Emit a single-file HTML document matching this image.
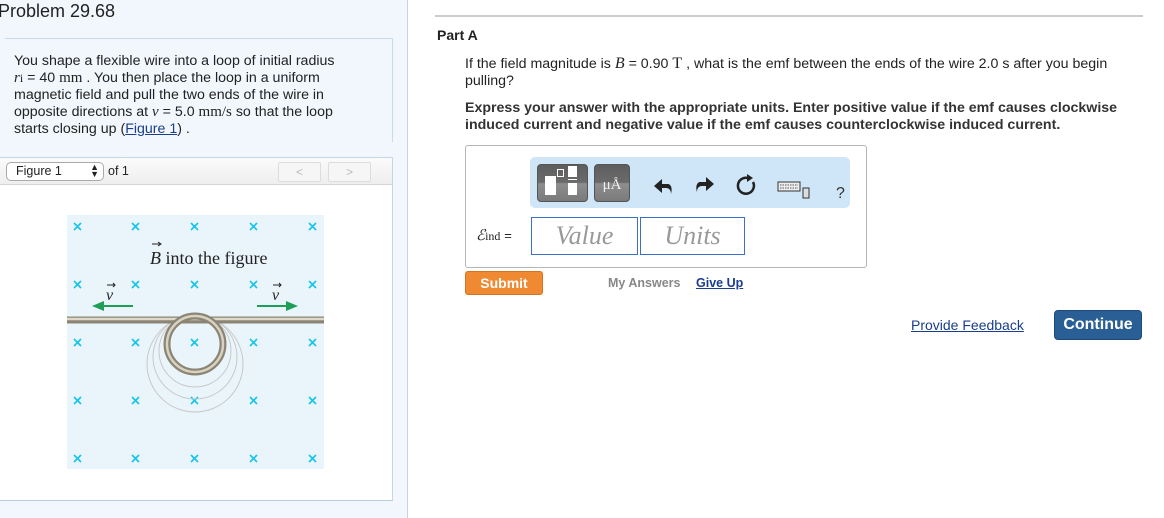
<!DOCTYPE html>
<html><head><meta charset="utf-8"><style>
*{margin:0;padding:0;box-sizing:border-box}
body{width:1164px;height:518px;position:relative;background:#fff;font-family:"Liberation Sans",Arial,sans-serif;overflow:hidden;color:#222}
.abs{position:absolute}
.m{font-family:"Liberation Serif",serif;font-style:italic}
.mono{font-family:"Liberation Serif",serif}
a{color:#1a3e8c}
.btn{border-radius:4px;background:linear-gradient(#5e5e5e 0,#6a6a6a 48%,#8e8e8e 52%,#7a7a7a 100%);border:1px solid #555}
</style></head><body>
<div class="abs" style="left:0;top:0;width:408px;height:518px;background:#f1f7fc;border-right:1px solid #c4d6e6"></div>
<div class="abs" style="left:-2px;top:1px;font-size:18px;color:#222">Problem 29.68</div>
<div class="abs" style="left:5px;top:38px;width:388px;height:104px;border-top:1px solid #c9dbe8;border-right:1px solid #c9dbe8"></div>
<div class="abs" style="left:14px;top:53px;width:345px;font-size:14.2px;line-height:17px;color:#222">You shape a flexible wire into a loop of initial radius <span style="white-space:nowrap"><span class="m" style="font-size:15px">r</span><span class="mono" style="font-size:12px">i</span> = 40 <span class="mono" style="font-size:15px">mm</span></span> . You then place the loop in a uniform magnetic field and pull the two ends of the wire in opposite directions at <span class="m" style="font-size:15px">v</span> = 5.0 <span class="mono" style="font-size:15px">mm/s</span> so that the loop starts closing up (<a href="#">Figure 1</a>) .</div>
<div class="abs" style="left:0;top:157px;width:393px;height:344px;background:#fff;border-top:1px solid #c4d6e6;border-right:1px solid #c4d6e6;border-bottom:1px solid #b8cadb"></div>
<div class="abs" style="left:0;top:158px;width:392px;height:27px;background:linear-gradient(#fbfbfb,#eeeeee);border-bottom:1px solid #d4d4d4"></div>
<div class="abs" style="left:6px;top:162px;width:98px;height:19px;border:1px solid #aaa;border-radius:5px;background:#fff;font-size:12.5px;padding:1px 0 0 9px">Figure 1<span style="position:absolute;right:4px;top:1px;font-size:9px;line-height:7px">▲<br>▼</span></div>
<div class="abs" style="left:108px;top:164px;font-size:12.5px">of 1</div>
<div class="abs" style="left:278px;top:162px;width:43px;height:20px;border:1px solid #ddd;border-radius:2px;background:#f6f6f6;color:#bbb;text-align:center;font-size:12px;line-height:18px">&lt;</div>
<div class="abs" style="left:328px;top:162px;width:43px;height:20px;border:1px solid #ddd;border-radius:2px;background:#f6f6f6;color:#bbb;text-align:center;font-size:12px;line-height:18px">&gt;</div>
<svg class="abs" style="left:0;top:0" width="408" height="518">
<rect x="67" y="215" width="257" height="254" fill="#eaf5fb"/>
<g stroke="#13c4ec" stroke-width="1.6" fill="none">
<path d="M74 223l7 7m0-7l-7 7M132 223l7 7m0-7l-7 7M191 223l7 7m0-7l-7 7M250 223l7 7m0-7l-7 7M309 223l7 7m0-7l-7 7
M74 281l7 7m0-7l-7 7M132 281l7 7m0-7l-7 7M191 281l7 7m0-7l-7 7M250 281l7 7m0-7l-7 7M309 281l7 7m0-7l-7 7
M74 339l7 7m0-7l-7 7M132 339l7 7m0-7l-7 7M191 339l7 7m0-7l-7 7M250 339l7 7m0-7l-7 7M309 339l7 7m0-7l-7 7
M74 397l7 7m0-7l-7 7M132 397l7 7m0-7l-7 7M191 397l7 7m0-7l-7 7M250 397l7 7m0-7l-7 7M309 397l7 7m0-7l-7 7
M74 455l7 7m0-7l-7 7M132 455l7 7m0-7l-7 7M191 455l7 7m0-7l-7 7M250 455l7 7m0-7l-7 7M309 455l7 7m0-7l-7 7"/>
</g>
<g fill="none" stroke="#c8c8c8" stroke-width="1">
<circle cx="195" cy="364" r="48"/><circle cx="195" cy="357" r="42"/><circle cx="195" cy="351" r="36"/>
</g>
<line x1="67" y1="320" x2="324" y2="320" stroke="#8c8575" stroke-width="7"/>
<line x1="67" y1="319" x2="324" y2="319" stroke="#ddd8c8" stroke-width="2.5"/>
<circle cx="195" cy="344" r="28" fill="none" stroke="#8c8575" stroke-width="7"/>
<circle cx="195" cy="344" r="28" fill="none" stroke="#d8d2c0" stroke-width="2.5"/>
<path d="M133 305H104v-4l-12 5 12 5v-4h29z" fill="#1f9e57"/>
<path d="M257 305h29v-4l12 5-12 5v-4h-29z" fill="#1f9e57"/>
<text x="150" y="264" font-family="Liberation Serif,serif" font-size="18" fill="#222"><tspan font-style="italic">B</tspan> into the figure</text>
<path d="M152 244h9m-3-2l3 2-3 2" stroke="#222" fill="none" stroke-width="1"/>
<text x="106" y="300" font-family="Liberation Serif,serif" font-style="italic" font-size="16" fill="#222">v</text>
<text x="272" y="300" font-family="Liberation Serif,serif" font-style="italic" font-size="16" fill="#222">v</text>
<path d="M107 285h8m-2-2l2 2-2 2M273 285h8m-2-2l2 2-2 2" stroke="#222" fill="none" stroke-width="1"/>
</svg>
<div class="abs" style="left:435px;top:15px;width:708px;height:2px;background:#ccc"></div>
<div class="abs" style="left:437px;top:27px;font-size:14px;font-weight:bold">Part A</div>
<div class="abs" style="left:465px;top:55px;width:665px;font-size:14.2px;line-height:17px">If the field magnitude is <span class="m" style="font-size:16px">B</span> = 0.90 <span class="mono" style="font-size:16px">T</span> , what is the emf between the ends of the wire 2.0 s after you begin pulling?</div>
<div class="abs" style="left:465px;top:100px;width:670px;font-size:14.2px;line-height:17px;font-weight:bold;color:#333">Express your answer with the appropriate units. Enter positive value if the emf causes clockwise induced current and negative value if the emf causes counterclockwise induced current.</div>
<div class="abs" style="left:465px;top:145px;width:402px;height:123px;border:1px solid #b5b5b5;border-radius:3px"></div>
<div class="abs" style="left:530px;top:157px;width:320px;height:51px;background:#cfe6f9;border-radius:5px"></div>
<div class="abs btn" style="left:537px;top:164px;width:51px;height:38px"></div>
<div class="abs" style="left:545px;top:176px;width:11px;height:19px;background:#fff"></div>
<div class="abs" style="left:557px;top:169px;width:7px;height:8px;border:1px solid #fff"></div>
<div class="abs" style="left:568px;top:166px;width:9px;height:11px;background:#fff"></div>
<div class="abs" style="left:568px;top:179px;width:9px;height:1px;background:#fff"></div>
<div class="abs" style="left:568px;top:183px;width:9px;height:12px;background:#fff"></div>
<div class="abs btn" style="left:594px;top:164px;width:36px;height:38px;color:#eee;font-family:'Liberation Serif',serif;font-size:15px;text-align:center;line-height:40px">μÅ</div>
<svg class="abs" style="left:650px;top:170px" width="200" height="36">
<path d="M18 14H12V9L4 16l8 7v-5h4c3 0 5 2 5 6 2-7-1-10-3-10z" fill="#222"/>
<path d="M50 12h6V7l8 7-8 7v-5h-4c-3 0-5 2-5 6-2-7 1-10 3-10z" fill="#222"/>
<path d="M98 8a8 8 0 1 0 5 4" fill="none" stroke="#222" stroke-width="2.5"/>
<path d="M97 4l6 4-6 4z" fill="#222"/>
<rect x="128" y="12" width="22" height="9" fill="#eee" stroke="#333"/>
<path d="M130 15h18M130 18h18" stroke="#555" stroke-dasharray="1.5 1"/>
<rect x="153" y="18" width="6" height="10" fill="#ddd" stroke="#333"/>
<text x="186" y="28" font-size="16" font-family="Liberation Sans" fill="#333">?</text>
</svg>
<div class="abs" style="left:476px;top:226px;font-size:15px;font-family:'Liberation Serif',serif"><i>ℰ</i><span style="font-size:12px">ind</span> <span style="font-family:'Liberation Sans';font-size:13px">=</span></div>
<div class="abs" style="left:531px;top:217px;width:107px;height:38px;border:1px solid #3a70c6;font-family:'Liberation Serif',serif;font-style:italic;font-size:26px;color:#999;text-align:center;line-height:36px">Value</div>
<div class="abs" style="left:640px;top:217px;width:105px;height:38px;border:1px solid #3a70c6;font-family:'Liberation Serif',serif;font-style:italic;font-size:26px;color:#999;text-align:center;line-height:36px">Units</div>
<div class="abs" style="left:465px;top:271px;width:78px;height:24px;border-radius:3px;background:#ef8a33;border:1px solid #d77320;color:#fff;font-weight:bold;font-size:14px;text-align:center;line-height:22px">Submit</div>
<div class="abs" style="left:608px;top:276px;font-size:12.5px;font-weight:bold;color:#888">My Answers</div>
<div class="abs" style="left:696px;top:276px;font-size:12.5px;font-weight:bold;color:#1a3e8c;text-decoration:underline">Give Up</div>
<div class="abs" style="left:911px;top:317px;font-size:14px;color:#1a3e8c;text-decoration:underline">Provide Feedback</div>
<div class="abs" style="left:1054px;top:310px;width:88px;height:30px;border-radius:4px;background:#2a5f96;border:1px solid #1d4a78;color:#fff;font-weight:bold;font-size:16px;text-align:center;line-height:28px">Continue</div>
</body></html>
